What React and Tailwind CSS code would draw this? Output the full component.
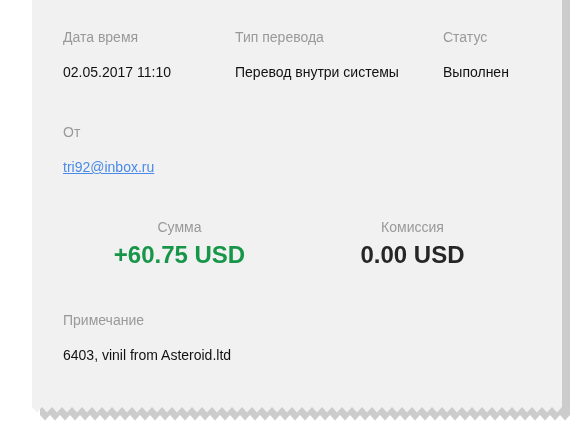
import React from 'react';

function Field({ label, children, className = '' }) {
    return (
        <div className={className}>
            <p className="text-[14px] leading-4 text-[#999999]">{label}</p>
            <div className="mt-[19px] text-[14px] leading-4 text-[#111111]">{children}</div>
        </div>
    );
}

function Amount({ label, value, color }) {
    return (
        <div className="flex flex-col items-center">
            <p className="text-[14px] leading-4 text-[#999999]">{label}</p>
            <p className={`mt-[6px] text-[24px] leading-7 font-bold ${color}`}>{value}</p>
        </div>
    );
}

function ZigZag() {
    return (
        <svg className="block w-full" height="6" aria-hidden="true">
            <defs>
                <pattern id="teeth" width="10" height="6" patternUnits="userSpaceOnUse">
                    <path d="M0 0 L5 5.5 L10 0 Z" fill="#f1f1f1" />
                </pattern>
            </defs>
            <rect width="100%" height="6" fill="url(#teeth)" />
        </svg>
    );
}

export default function App() {
    return (
        <div className="min-h-[446px] w-[588px] overflow-hidden bg-white font-['Liberation_Sans',Arial,sans-serif]">
            <div className="-mt-[10px] ml-[32px] w-[530px] drop-shadow-[8px_8px_0_#cccccc]">
                <div className="bg-[#f1f1f1] px-[31px] pt-[39px] pb-[44px]">
                    <div className="grid grid-cols-[172px_208px_1fr]">
                        <Field label="Дата время">02.05.2017 11:10</Field>
                        <Field label="Тип перевода">Перевод внутри системы</Field>
                        <Field label="Статус">Выполнен</Field>
                    </div>

                    <Field label="От" className="mt-[44px]">
                        <a href="#" className="text-[#4a8ae8] underline">tri92@inbox.ru</a>
                    </Field>

                    <div className="mt-[44px] grid grid-cols-2 pr-[2px]">
                        <Amount label="Сумма" value="+60.75 USD" color="text-[#17964a]" />
                        <Amount label="Комиссия" value="0.00 USD" color="text-[#262626]" />
                    </div>

                    <Field label="Примечание" className="mt-[43px]">
                        6403, vinil from Asteroid.ltd
                    </Field>
                </div>
                <ZigZag />
            </div>
        </div>
    );
}
